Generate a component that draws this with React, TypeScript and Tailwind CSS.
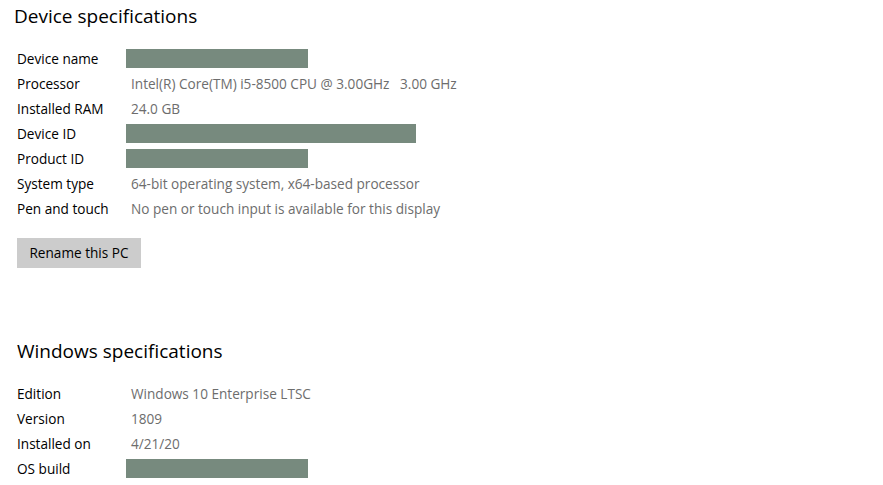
import React from 'react';

type Spec = {
    label: string;
    value?: string;
    redacted?: number;
};

const deviceSpecs: Spec[] = [
    { label: 'Device name', redacted: 182 },
    { label: 'Processor', value: 'Intel(R) Core(TM) i5-8500 CPU @ 3.00GHz\u00a0\u00a0 3.00 GHz' },
    { label: 'Installed RAM', value: '24.0 GB' },
    { label: 'Device ID', redacted: 290 },
    { label: 'Product ID', redacted: 182 },
    { label: 'System type', value: '64-bit operating system, x64-based processor' },
    { label: 'Pen and touch', value: 'No pen or touch input is available for this display' },
];

const windowsSpecs: Spec[] = [
    { label: 'Edition', value: 'Windows 10 Enterprise LTSC' },
    { label: 'Version', value: '1809' },
    { label: 'Installed on', value: '4/21/20' },
    { label: 'OS build', redacted: 182 },
];

function SpecRow({ label, value, redacted }: Spec) {
    return (
        <div className="flex h-[25px] items-center">
            <div className="w-[110px] pl-[1px] text-black">{label}</div>
            {redacted ? (
                <div className="h-[19px] bg-[#778a7e]" style={{ width: redacted }} />
            ) : (
                <div className="pl-[5px] text-[#6d6d6d] whitespace-pre">{value}</div>
            )}
        </div>
    );
}

function Section({ title, specs, titleClass }: { title: string; specs: Spec[]; titleClass: string }) {
    return (
        <section>
            <h2 className={`text-[19px] leading-[28px] text-black ${titleClass}`}>{title}</h2>
            <div className="mt-[16px] flex flex-col">
                {specs.map((s) => (
                    <SpecRow key={s.label} {...s} />
                ))}
            </div>
        </section>
    );
}

export default function App() {
    return (
        <div
            className="w-[883px] h-[485px] overflow-hidden bg-white pl-[16px] pt-[2px] text-[13.6px] leading-[20px]"
            style={{ fontFamily: '"Open Sans", "Noto Sans", sans-serif' }}
        >
            <Section title="Device specifications" specs={deviceSpecs} titleClass="-ml-[2px]" />

            {/* Rename button */}
            <button className="mt-[17px] ml-[1px] h-[30px] w-[124px] bg-[#cccccc] text-black">
                Rename this PC
            </button>

            <div className="mt-[69px]">
                <Section title="Windows specifications" specs={windowsSpecs} titleClass="ml-[1px]" />
            </div>
        </div>
    );
}
